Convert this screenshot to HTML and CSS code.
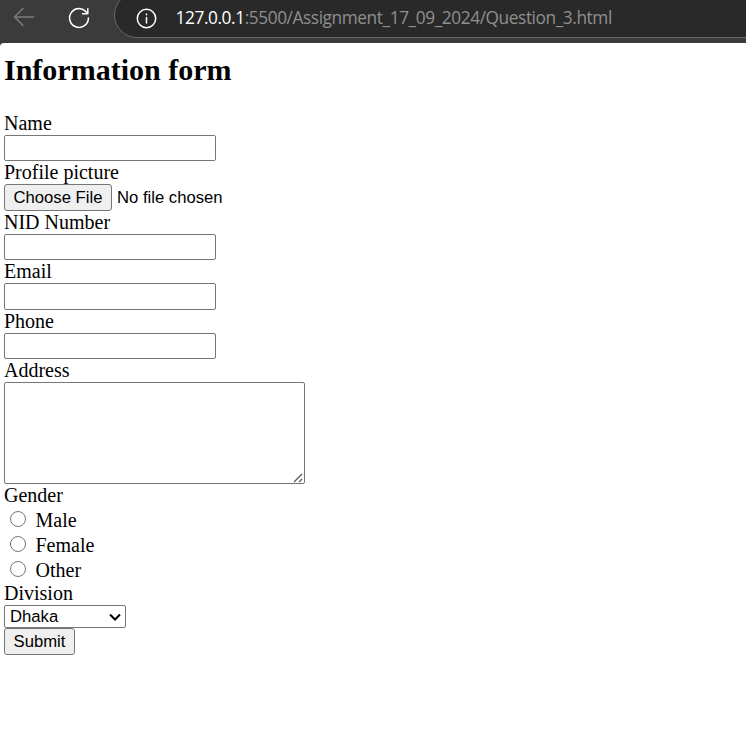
FILE: index.html
```
<!DOCTYPE html>
<html lang="en">
<head>
<meta charset="utf-8">
<title>Information form</title>
<link rel="stylesheet" href="styles.css">
</head>
<body>
<header class="toolbar">
  <svg class="icon back" viewBox="0 0 24 24"><path d="M21.5 12H2.5M11 3.5L2.5 12L11 20.5"/></svg>
  <svg class="icon reload" viewBox="0 0 24 24"><path d="M20.3 7.6A9.4 9.4 0 1 0 21.4 12M20.8 2.8V7.8H15.6"/></svg>
  <div class="address">
    <svg class="icon info" viewBox="0 0 24 24"><circle cx="12.5" cy="12.5" r="9.2"/><path d="M12.5 11.5V17M12.5 8V8.8"/></svg>
    <span class="url"><span class="host">127.0.0.1</span>:5500/Assignment_17_09_2024/Question_3.html</span>
  </div>
</header>
<main class="page">
  <h1>Information form</h1>
  <form>
    <label for="name">Name</label>
    <input class="field" type="text" id="name">
    <label for="picture">Profile picture</label>
    <input class="file" type="file" id="picture">
    <label for="nid">NID Number</label>
    <input class="field" type="text" id="nid">
    <label for="email">Email</label>
    <input class="field tall" type="email" id="email">
    <label for="phone">Phone</label>
    <input class="field" type="tel" id="phone">
    <label for="address">Address</label>
    <div class="control">
      <textarea id="address"></textarea>
      <svg class="grip" viewBox="0 0 10 10"><path d="M1 9L9 1M6 9L9 6"/></svg>
    </div>
    <span class="label">Gender</span>
    <label class="option"><input type="radio" name="gender">Male</label>
    <label class="option"><input type="radio" name="gender">Female</label>
    <label class="option"><input type="radio" name="gender">Other</label>
    <label for="division">Division</label>
    <div class="control">
      <select id="division"><option>Dhaka</option></select>
      <svg class="chevron" viewBox="0 0 12 8"><path d="M1 1.5L6 6.5L11 1.5"/></svg>
    </div>
    <button type="button">Submit</button>
  </form>
</main>
</body>
</html>
```
FILE: styles.css
```
* { box-sizing: border-box; }
html { background: #3b3b3b; }
body { margin: 0; height: 747px; overflow: hidden; display: flex; flex-direction: column; }
.toolbar { height: 43px; flex: none; display: flex; align-items: flex-start; background: #3b3b3b; }
.icon { width: 24px; height: 24px; flex: none; fill: none; stroke: #fff; stroke-width: 1.5; stroke-linecap: round; stroke-linejoin: round; }
.back { margin: 5px 0 0 12px; stroke: #7d7d7d; }
.reload { margin: 6px 0 0 31px; }
.address {
  flex: 1; height: 46px; margin: -8px -30px 0 23px; padding-left: 19px;
  display: flex; align-items: center;
  background: #292929; border: 1px solid #686868; border-radius: 23px;
}
.info { margin-top: 6px; }
.url { margin: 5px 0 0 17.5px; color: #8f8f8f; font: 17.3px/24px "Open Sans", "Noto Sans", sans-serif; letter-spacing: -0.42px; white-space: nowrap; }
.host { color: #fff; }
.page { flex: 1; padding: 0 4px; background: #fff; border-top-left-radius: 4px; font: 20px/23px "Liberation Serif", serif; color: #000; }
h1 { margin: 0 0 24px; padding-top: 9px; font-size: 30px; line-height: 36px; }
form { display: flex; flex-direction: column; align-items: flex-start; }
label, .label { height: 23px; line-height: 22px; }
input, textarea, select, button { margin: 0; font-family: "Liberation Sans", sans-serif; font-size: 16.67px; }
.field { width: 212px; height: 26px; border: 1px solid #767676; border-radius: 2px; }
.tall { height: 27px; }
.file { height: 27px; width: 300px; line-height: 25px; }
.file::file-selector-button, button {
  height: 27px; box-sizing: border-box; margin: 0 5px 0 0; padding: 0; border: 1px solid #767676; border-radius: 3px;
  background: #efefef; color: #000; font: 16.67px/25px "Liberation Sans", sans-serif;
}
.file::file-selector-button { width: 108px; }
.control { position: relative; display: flex; }
textarea { width: 301px; height: 102px; border: 1px solid #767676; border-radius: 2px; resize: none; }
.grip { position: absolute; right: 2px; bottom: 1px; width: 10px; height: 10px; fill: none; stroke: #555; stroke-width: 1.2; }
.option { height: 25px; display: flex; line-height: 27px; }
.option input { width: 16px; height: 16px; margin: 3.5px 9.5px 0 6px; }
select { appearance: none; width: 122px; height: 23px; padding: 0 0 1px 5px; border: 1px solid #767676; border-radius: 2px; background-color: #fff; color: #000; }
.chevron { position: absolute; right: 5px; top: 8px; width: 12px; height: 8px; fill: none; stroke: #000; stroke-width: 2; pointer-events: none; }
button { width: 71px; }
```
